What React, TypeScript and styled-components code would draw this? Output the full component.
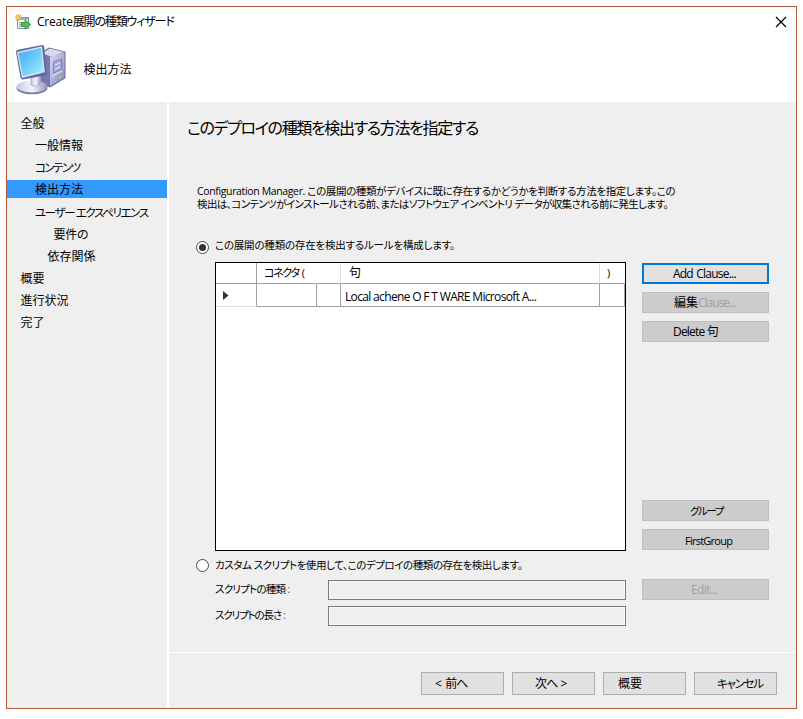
import React from "react";
import styled, { createGlobalStyle } from "styled-components";

const Global = createGlobalStyle`
  * { box-sizing: border-box; }
  body { margin: 0; background: #fff; }
`;

const Page = styled.div`
  width: 803px;
  height: 719px;
  padding: 6px;
  background: #fff;
  overflow: hidden;
  font-family: "Open Sans", "Noto Sans CJK JP", sans-serif;
  font-size: 12px;
  color: #000;
`;

const Window = styled.div`
  width: 791px;
  height: 703px;
  border: 1px solid #b5583a;
  background: #efefef;
  display: flex;
  flex-direction: column;
`;

const Text = styled.span<{
  $size?: number;
  $track?: number;
  $word?: number;
  $color?: string;
  $line?: number;
  $top?: number;
}>`
  display: block;
  white-space: pre;
  margin-top: ${(p) => p.$top ?? 0}px;
  font-size: ${(p) => p.$size ?? 12}px;
  letter-spacing: ${(p) => p.$track ?? 0}px;
  word-spacing: ${(p) => p.$word ?? 0}px;
  line-height: ${(p) => p.$line ?? 18}px;
  color: ${(p) => p.$color ?? "inherit"};
  font-feature-settings: "palt";
`;

const Header = styled.header`
  height: 95px;
  flex: none;
  background: #fff;
`;

const TitleBar = styled.div`
  height: 30px;
  display: flex;
  align-items: center;
  padding: 0 9px 0 8px;
  gap: 6px;
`;

const Title = styled.div`
  display: flex;
`;

const CloseButton = styled.button`
  margin-left: auto;
  padding: 0;
  border: 0;
  background: none;
  width: 12px;
  height: 12px;
  display: flex;
`;

const Banner = styled.div`
  display: flex;
  align-items: center;
  gap: 13.5px;
  height: 63px;
  padding-left: 7px;
`;

const Body = styled.div`
  flex: 1;
  display: flex;
  min-height: 0;
`;

const Sidebar = styled.nav`
  width: 162px;
  border-right: 2px solid #fff;
  padding-top: 12px;
  display: flex;
  flex-direction: column;
  gap: 4.15px;
`;

const NavItem = styled.div<{ $indent: number; $active?: boolean }>`
  height: 18px;
  flex: none;
  padding: 1px 0 0 ${(p) => p.$indent}px;
  background: ${(p) => (p.$active ? "#3399ff" : "transparent")};
`;

const Main = styled.main`
  flex: 1;
  display: flex;
  flex-direction: column;
`;

const Content = styled.div`
  height: 550px;
  padding: 14px 27px 0 18px;
`;

const Intro = styled.div`
  padding: 45px 0 0 10px;
  height: 98px;
`;

const Option = styled.div<{ $above?: number; $below?: number }>`
  display: flex;
  align-items: center;
  height: 18px;
  margin: ${(p) => p.$above ?? 0}px 0 ${(p) => p.$below ?? 0}px;
  padding-left: 9px;
  gap: 6px;
`;

const RuleArea = styled.div`
  display: flex;
  gap: 16px;
  padding: 6px 0 0 28px;
`;

const Table = styled.div`
  width: 411px;
  height: 289px;
  border: 1px solid #000;
  background: #fff;
`;

const Row = styled.div<{ $head?: boolean }>`
  display: grid;
  grid-template-columns: 41px 60px 24px 259px 25px;
  height: ${(p) => (p.$head ? 21 : 23)}px;
`;

const Cell = styled.div<{ $line?: string; $pad?: number; $bottom?: string }>`
  border-right: 1px solid ${(p) => p.$line ?? "#a0a0a0"};
  border-bottom: 1px solid ${(p) => p.$bottom ?? "#a0a0a0"};
  padding-left: ${(p) => p.$pad ?? 0}px;
  display: flex;
  align-items: center;
  min-width: 0;
`;

const Actions = styled.div`
  width: 127px;
  height: 288px;
  padding: 1px 0 0;
  display: flex;
  flex-direction: column;
  gap: 8px;
`;

const Spacer = styled.div`
  flex: 1;
`;

const Button = styled.button<{ $kind?: "focus" | "flat"; $w?: number; $pad: number }>`
  width: ${(p) => p.$w ?? 127}px;
  height: ${(p) => (p.$kind ? 21 : 23)}px;
  flex: none;
  padding: 0 0 0 ${(p) => p.$pad - (p.$kind === "focus" ? 2 : 1)}px;
  display: flex;
  align-items: center;
  font-family: inherit;
  color: #000;
  border: ${(p) =>
    p.$kind === "focus" ? "2px solid #0078d7" : p.$kind === "flat" ? "1px solid #bfbfbf" : "1px solid #adadad"};
  background: ${(p) => (p.$kind === "flat" ? "#cccccc" : "#e1e1e1")};
`;

const ScriptRow = styled.div`
  display: flex;
  align-items: flex-end;
  height: 20px;
  margin-bottom: 6px;
  padding-left: 28px;
`;

const FieldLabel = styled.div`
  width: 113px;
  display: flex;
  gap: 2px;
  padding-bottom: 2px;
`;

const Field = styled.div`
  width: 298px;
  height: 20px;
  border: 1px solid #7a7a7a;
  box-shadow: inset 0 0 0 1px #fafafa;
`;

const Footer = styled.footer`
  flex: 1;
  border-top: 1px solid #fff;
  display: flex;
  justify-content: flex-end;
  padding: 19px 19px 0 0;
  gap: 8px;
`;

const WizardIcon = () => (
  <svg width="16" height="16" viewBox="0 0 16 16">
    <rect x="2.5" y="3.5" width="11" height="11" fill="#f8fafb" stroke="#7c98a8" />
    <path d="M3 4h10v2H3z" fill="#8db4d4" />
    <path d="M4 8h4v5H4z" fill="#cfdce5" />
    <path d="M4 8.5h4M4 10.5h3M4 12.5h4" stroke="#7897ac" strokeWidth=".7" />
    <path d="M6.5 8.5h3.5V6l5.7 4.5L10 15v-2.5H6.5z" fill="#51bd45" stroke="#27852c" strokeWidth=".7" />
    <path d="M3.4 0v7M0 3.4h7M1 1l5 5M6 1L1 6" stroke="#eda43a" strokeWidth="1.1" />
    <circle cx="3.4" cy="3.4" r="1.5" fill="#ffd35a" />
  </svg>
);

const ComputerIcon = () => (
  <svg width="56" height="54" viewBox="0 0 56 54">
    <defs>
      <linearGradient id="screen" x1="0" y1="0" x2="1" y2="1">
        <stop offset="0" stopColor="#45a9f2" />
        <stop offset=".5" stopColor="#6dcafb" />
        <stop offset="1" stopColor="#a8f0ff" />
      </linearGradient>
      <linearGradient id="side" x1="0" y1="0" x2="1" y2="1">
        <stop offset="0" stopColor="#d9daf2" />
        <stop offset="1" stopColor="#8688bd" />
      </linearGradient>
      <linearGradient id="stand" x1="0" y1="0" x2="1" y2="0">
        <stop offset="0" stopColor="#c3c4de" />
        <stop offset=".5" stopColor="#f5f5fd" />
        <stop offset="1" stopColor="#8f91bc" />
      </linearGradient>
    </defs>
    <path d="M27 11l8-5 16 4v26l-15 9-9-4z" fill="#7578b1" stroke="#666a9e" strokeLinejoin="round" />
    <path d="M28 11l8-4.5 14 3.5-12 5z" fill="#d8d9f1" />
    <path d="M36 15l14.5-4.5v25L36 44z" fill="url(#side)" />
    <path d="M39.5 20l8-3v10l-8 4z" fill="#a9abd9" stroke="#7073b0" strokeWidth=".8" />
    <path d="M41 23l5-2M41 27l5-2M38 34l10-5" stroke="#ececfb" />
    <circle cx="46.5" cy="35" r="1.3" fill="#8cd84a" />
    <ellipse cx="18" cy="46" rx="15.5" ry="6.3" fill="#777aa5" />
    <ellipse cx="18" cy="44.5" rx="15.5" ry="6" fill="url(#stand)" />
    <path d="M17 32l10-2-1 12q-4 4-9 1z" fill="url(#stand)" stroke="#9799c2" strokeWidth=".6" />
    <path d="M2 10q0-2 2-2.3L28 3q2 0 2.300 2l2 26q0 2-2 2.500L9 37.500q-2 0-2.500-2z" fill="#606a99" />
    <path d="M3 10L28 4.200l2.800 26L8 36z" fill="#d6e5f7" />
    <path d="M4.500 11.200L27 6l2.200 23L9 34z" fill="url(#screen)" />
  </svg>
);

const Radio = ({ checked = false }: { checked?: boolean }) => (
  <svg width="13" height="13" viewBox="0 0 13 13">
    <circle cx="6.5" cy="6.5" r="6" fill="#fff" stroke="#4a4a4a" />
    {checked && <circle cx="6.5" cy="6.5" r="3.5" fill="#333" />}
  </svg>
);

const nav = [
  { label: "全般", indent: 13.5 },
  { label: "一般情報", indent: 28 },
  { label: "コンテンツ", indent: 28, size: 11.5, track: -1.6 },
  { label: "検出方法", indent: 28, active: true },
  { label: "ユーザー エクスペリエンス", indent: 28, size: 11.5, track: -1.38 },
  { label: "要件の", indent: 46.5, track: -0.3 },
  { label: "依存関係", indent: 40.5 },
  { label: "概要", indent: 13.5 },
  { label: "進行状況", indent: 13.5 },
  { label: "完了", indent: 13.5 },
];

export default function App() {
  return (
    <Page>
      <Global />
      <Window>
        <Header>
          <TitleBar>
            <WizardIcon />
            <Title>
              <Text $track={-0.2}>Create</Text>
              <Text $track={-1.15}>展開の種類ウィザード</Text>
            </Title>
            <CloseButton aria-label="閉じる">
              <svg width="12" height="12" viewBox="0 0 12 12">
                <path d="M1 1l10 10M11 1L1 11" stroke="#000" strokeWidth="1.2" />
              </svg>
            </CloseButton>
          </TitleBar>
          <Banner>
            <ComputerIcon />
            <Text $top={2}>検出方法</Text>
          </Banner>
        </Header>
        <Body>
          <Sidebar>
            {nav.map((n) => (
              <NavItem key={n.label} $indent={n.indent} $active={n.active}>
                <Text $size={n.size} $track={n.track}>{n.label}</Text>
              </NavItem>
            ))}
          </Sidebar>
          <Main>
            <Content>
              <Text $size={16} $track={-1.35} $line={24}>このデプロイの種類を検出する方法を指定する</Text>
              <Intro>
                <Text $size={10.5} $track={-0.36} $line={13}>Configuration Manager. この展開の種類がデバイスに既に存在するかどうかを判断する方法を指定します。この</Text>
                <Text $size={10.5} $track={-0.6} $line={13}>検出は、コンテンツがインストールされる前、またはソフトウェア インベントリ データが収集される前に発生します。</Text>
              </Intro>
              <Option>
                <Radio checked />
                <Text $size={10.5} $track={-0.2} $top={-4}>この展開の種類の存在を検出するルールを構成します。</Text>
              </Option>
              <RuleArea>
                <Table>
                  <Row $head>
                    <Cell />
                    <Cell $line="#fff" $pad={7}><Text $size={11} $track={-1.35} $word={1.5}>コネクタ (</Text></Cell>
                    <Cell $line="#dcdcdc" />
                    <Cell $line="#dcdcdc" $pad={8}><Text>句</Text></Cell>
                    <Cell $line="#fff" $pad={7}><Text $size={11}>)</Text></Cell>
                  </Row>
                  <Row>
                    <Cell $pad={7} $bottom="#dcdcdc">
                      <svg width="6" height="9" viewBox="0 0 6 9"><path d="M0 0l5.5 4.5L0 9z" fill="#333" /></svg>
                    </Cell>
                    <Cell />
                    <Cell />
                    <Cell $pad={4}><Text $track={-0.66} $top={3}>Local achene O F T WARE Microsoft A...</Text></Cell>
                    <Cell />
                  </Row>
                </Table>
                <Actions>
                  <Button $kind="focus" $pad={31}><Text $track={-0.78} $word={1}>Add Clause...</Text></Button>
                  <Button $kind="flat" $pad={32}>
                    <Text>編集</Text>
                    <Text $track={-1} $color="#a0a0a0">Clause...</Text>
                  </Button>
                  <Button $kind="flat" $pad={31}><Text $track={-0.8}>Delete 句</Text></Button>
                  <Spacer />
                  <Button $kind="flat" $pad={48}><Text $size={10.5} $track={-1.5}>グループ</Text></Button>
                  <Button $kind="flat" $pad={43}><Text $size={11} $track={-0.75} $top={3}>FirstGroup</Text></Button>
                </Actions>
              </RuleArea>
              <Option $above={5} $below={6}>
                <Radio />
                <Text $size={10.5} $track={-0.45}>カスタム スクリプトを使用して、このデプロイの種類の存在を検出します。</Text>
              </Option>
              <ScriptRow>
                <FieldLabel>
                  <Text $size={10.5} $track={-0.75}>スクリプトの種類</Text>
                  <Text $size={11} $color="#6b3fb5">:</Text>
                </FieldLabel>
                <Field />
                <Spacer />
                <Button $kind="flat" $pad={49}><Text $color="#a0a0a0" $track={-0.6}>Edit...</Text></Button>
              </ScriptRow>
              <ScriptRow>
                <FieldLabel>
                  <Text $size={10.5} $track={-1.15}>スクリプトの長さ</Text>
                  <Text $size={11} $color="#6b3fb5">:</Text>
                </FieldLabel>
                <Field />
              </ScriptRow>
            </Content>
            <Footer>
              <Button $w={83} $pad={14}><Text $track={-0.9} $word={2}>{"< 前へ"}</Text></Button>
              <Button $w={83} $pad={23}><Text $track={-0.9} $word={1}>{"次へ >"}</Text></Button>
              <Button $w={83} $pad={15}><Text>概要</Text></Button>
              <Button $w={83} $pad={23}><Text $size={11.5} $track={-1.25}>キャンセル</Text></Button>
            </Footer>
          </Main>
        </Body>
      </Window>
    </Page>
  );
}
